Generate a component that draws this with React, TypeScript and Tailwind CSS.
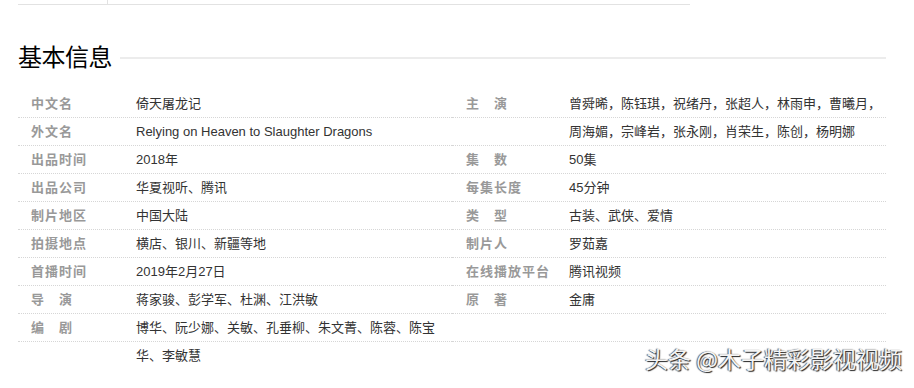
import React from 'react';

type Line = { label?: string; value?: string };

const leftLines: Line[] = [
  { label: '中文名', value: '倚天屠龙记' },
  { label: '外文名', value: 'Relying on Heaven to Slaughter Dragons' },
  { label: '出品时间', value: '2018年' },
  { label: '出品公司', value: '华夏视听、腾讯' },
  { label: '制片地区', value: '中国大陆' },
  { label: '拍摄地点', value: '横店、银川、新疆等地' },
  { label: '首播时间', value: '2019年2月27日' },
  { label: '导　演', value: '蒋家骏、彭学军、杜渊、江洪敏' },
  { label: '编　剧', value: '博华、阮少娜、关敏、孔垂柳、朱文菁、陈蓉、陈宝' },
  { value: '华、李敏慧' },
];

const rightLines: Line[] = [
  { label: '主　演', value: '曾舜晞，陈钰琪，祝绪丹，张超人，林雨申，曹曦月，' },
  { value: '周海媚，宗峰岩，张永刚，肖荣生，陈创，杨明娜' },
  { label: '集　数', value: '50集' },
  { label: '每集长度', value: '45分钟' },
  { label: '类　型', value: '古装、武侠、爱情' },
  { label: '制片人', value: '罗茹嘉' },
  { label: '在线播放平台', value: '腾讯视频' },
  { label: '原　著', value: '金庸' },
  {},
];

const InfoColumn: React.FC<{ lines: Line[]; lastBorder: boolean; labelWidth: string; pad: string }> = ({
  lines,
  lastBorder,
  labelWidth,
  pad,
}) => (
  <div className="flex-1">
    {lines.map((line, i) => (
      <div
        key={i}
        className={
          'flex items-center h-[28px] text-[13px] ' +
          pad +
          (i < lines.length - 1 || lastBorder ? ' border-b border-dotted border-[#d6d6d6]' : '')
        }
      >
        <span className={'shrink-0 font-bold text-[#999] tracking-[1px] ' + labelWidth}>{line.label}</span>
        <span className="text-[#333] whitespace-nowrap">{line.value}</span>
      </div>
    ))}
  </div>
);

export default function App() {
  return (
    <div className="relative w-[914px] h-[388px] bg-white overflow-hidden font-['Liberation_Sans','Noto_Sans_CJK_SC',sans-serif]">
      {/* top tab strip */}
      <div className="ml-[18px] w-[672px] h-[5px] border-b border-[#e2e2e2] flex">
        <div className="w-[90px] border-r border-[#e2e2e2]" />
      </div>

      {/* heading */}
      <div className="mt-[35px] ml-[18px] mr-[28px] h-[32px] flex items-center">
        <h2 className="text-[24px] leading-[32px] text-black font-['Noto_Sans_CJK_SC',sans-serif] tracking-[-0.5px]">
          基本信息
        </h2>
        <div className="flex-1 ml-[8px] mt-[4px] h-[2px] bg-[#ececec]" />
      </div>

      {/* info table */}
      <div className="mt-[18px] ml-[18px] w-[868px] flex">
        <InfoColumn lines={leftLines} lastBorder={false} labelWidth="w-[105px]" pad="pl-[13px]" />
        <InfoColumn lines={rightLines} lastBorder labelWidth="w-[103px]" pad="pl-[14px]" />
      </div>

      {/* watermark */}
      <div className="absolute left-[645px] top-[342px] text-[23px] leading-[32px] text-[#f4f4f4] whitespace-nowrap font-['Noto_Sans_CJK_SC',sans-serif] [text-shadow:1px_1px_1px_#222,-1px_0_1px_#555]">
        头条 @木子精彩影视视频
      </div>
    </div>
  );
}
